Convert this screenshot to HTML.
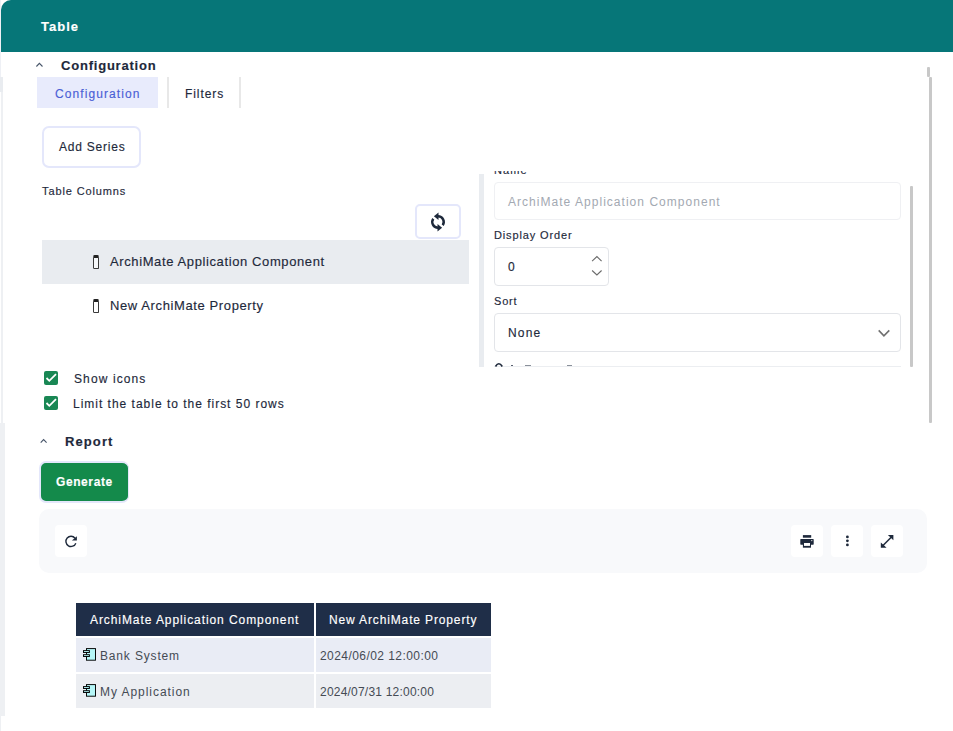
<!DOCTYPE html>
<html><head><meta charset="utf-8">
<style>
*{box-sizing:border-box;margin:0;padding:0}
html,body{width:953px;height:731px;overflow:hidden;background:#fff;font-family:"Liberation Sans",sans-serif;color:#1e293b}
.a{position:absolute}
.t{position:absolute;white-space:pre;line-height:1;-webkit-text-stroke:0.15px currentColor}
</style></head><body>
<!-- left faint strips -->
<div class="a" style="left:0;top:0;width:1px;height:77px;background:#eef0f5"></div>
<div class="a" style="left:0;top:77px;width:3px;height:15px;background:#e9ecf0"></div>
<div class="a" style="left:1px;top:92px;width:2px;height:331px;background:#eef0f3"></div>
<div class="a" style="left:0;top:423px;width:5px;height:293px;background:#eef0f3"></div>
<div class="a" style="left:0;top:716px;width:1px;height:15px;background:#eef0f3"></div>

<!-- header -->
<div class="a" style="left:1px;top:0;width:970px;height:52px;background:#067678;border-radius:10px 10px 0 0"></div>
<div class="t" style="left:41px;top:20px;font-size:13px;font-weight:700;color:#fff;letter-spacing:1px">Table</div>

<!-- Configuration section heading -->
<svg class="a" style="left:32px;top:56px" width="16" height="16" viewBox="0 0 16 16"><path d="M4.4 10.5 L7.4 7.4 L10.5 10.5" fill="none" stroke="#475569" stroke-width="1.1"/></svg>
<div class="t" style="left:61px;top:59px;font-size:13px;font-weight:700;color:#1e293b;letter-spacing:0.79px">Configuration</div>

<!-- tabs -->
<div class="a" style="left:37px;top:77px;width:121px;height:31px;background:#e8ebfc"></div>
<div class="t" style="left:55px;top:88px;font-size:12px;color:#4b5fd6;letter-spacing:1.08px">Configuration</div>
<div class="a" style="left:167px;top:77px;width:2px;height:31px;background:#e8e8e8"></div>
<div class="t" style="left:185px;top:88px;font-size:12px;color:#1e293b;letter-spacing:0.92px">Filters</div>
<div class="a" style="left:239px;top:77px;width:2px;height:31px;background:#e8e8e8"></div>

<!-- Add series -->
<div class="a" style="left:42px;top:126px;width:99px;height:42px;border:2px solid #e4e7fb;border-radius:7px"></div>
<div class="t" style="left:59px;top:141px;font-size:12px;color:#1e293b;letter-spacing:0.78px">Add Series</div>

<div class="t" style="left:42px;top:186px;font-size:11px;color:#1e293b;letter-spacing:0.88px">Table Columns</div>

<!-- sync button -->
<div class="a" style="left:415px;top:204px;width:46px;height:35px;border:2px solid #e4e7fb;border-radius:5px"></div>
<svg class="a" style="left:428px;top:212px" width="20" height="20" viewBox="0 0 20 20"><g fill="#1e293b"><path d="M10 4.25 A5.75 5.75 0 0 1 14.7 13.3" fill="none" stroke="#1e293b" stroke-width="2.4"/><path d="M5.9 4.25 L10.5 0.4 L10.5 8.1Z"/><path d="M5.3 6.7 A5.75 5.75 0 0 0 10 15.75" fill="none" stroke="#1e293b" stroke-width="2.4"/><path d="M14.1 15.75 L9.5 11.9 L9.5 19.6Z"/></g></svg>

<!-- list -->
<div class="a" style="left:42px;top:240px;width:427px;height:44px;background:#e9ecf0"></div>
<div class="a" style="left:93px;top:255px;width:6px;height:14px;border:1px solid #3a3a3a;border-top:3.5px solid #222;border-radius:1.5px;background:#f6f8fa"></div>
<div class="t" style="left:110px;top:255px;font-size:13px;color:#1e293b;letter-spacing:0.61px">ArchiMate Application Component</div>
<div class="a" style="left:93px;top:299px;width:6px;height:14px;border:1px solid #3a3a3a;border-top:3.5px solid #222;border-radius:1.5px;background:#fff"></div>
<div class="t" style="left:110px;top:299px;font-size:13px;color:#1e293b;letter-spacing:0.61px">New ArchiMate Property</div>

<!-- separator -->
<div class="a" style="left:479px;top:174px;width:5px;height:193px;background:#e9ecf0"></div>

<!-- right panel (clipped) -->
<div class="a" style="left:484px;top:171px;width:432px;height:196px;overflow:hidden">
  <div class="t" style="left:10px;top:-6px;font-size:11px;color:#1e293b;letter-spacing:1.1px">Name</div>
  <div class="a" style="left:10px;top:11px;width:407px;height:38px;border:1px solid #eff0f3;border-radius:4px"></div>
  <div class="t" style="left:24px;top:25px;font-size:12px;color:#a3a9b2;letter-spacing:1.03px;-webkit-text-stroke:0">ArchiMate Application Component</div>
  <div class="t" style="left:10px;top:59px;font-size:11px;color:#1e293b;letter-spacing:0.86px">Display Order</div>
  <div class="a" style="left:10px;top:76px;width:115px;height:39px;border:1.5px solid #e3e5e9;border-radius:4px"></div>
  <div class="t" style="left:24px;top:90px;font-size:12px;color:#1e293b">0</div>
  <svg class="a" style="left:104px;top:82px" width="16" height="28" viewBox="0 0 16 28"><path d="M4.1 8.1 L8.9 3.6 L13.6 8.1 M4.1 17.5 L8.9 22 L13.6 17.5" fill="none" stroke="#6b6b6b" stroke-width="1.1"/></svg>
  <div class="t" style="left:10px;top:125px;font-size:11px;color:#1e293b;letter-spacing:0.8px">Sort</div>
  <div class="a" style="left:10px;top:142px;width:407px;height:39px;border:1.5px solid #e3e5e9;border-radius:4px"></div>
  <div class="t" style="left:24px;top:156px;font-size:12px;color:#1e293b;letter-spacing:1.2px">None</div>
  <svg class="a" style="left:386px;top:151px" width="24" height="20" viewBox="0 0 24 20"><path d="M8.7 8.4 L13.9 13.9 L19.3 8.4" fill="none" stroke="#707070" stroke-width="1.6"/></svg>
  <div class="a" style="left:10px;top:195px;width:407px;height:1px;background:#eceef1"></div>
  <svg class="a" style="left:8px;top:188px" width="24" height="8" viewBox="0 0 24 8"><path d="M3.5 7.5 Q6.8 2 10.3 7.5" fill="none" stroke="#1e293b" stroke-width="1.6"/></svg>
  <div class="a" style="left:26.5px;top:194px;width:2px;height:1px;background:#5a6170"></div>
  <div class="a" style="left:41px;top:194px;width:6px;height:1px;background:#8a909a"></div>
  <div class="a" style="left:83px;top:194px;width:5px;height:1px;background:#8a909a"></div>
  <div class="a" style="left:426px;top:15px;width:3px;height:181px;background:#c8c8c8;border-radius:1px"></div>
</div>

<!-- outer scrollbar -->
<div class="a" style="left:927px;top:67px;width:3px;height:10px;background:#c8c8c8;border-radius:1px"></div>
<div class="a" style="left:929px;top:77px;width:3px;height:346px;background:#c8c8c8;border-radius:1px"></div>

<!-- checkboxes -->
<div class="a" style="left:44px;top:371px;width:14px;height:14px;background:#198754;border-radius:2px"></div><svg class="a" style="left:44px;top:371px" width="14" height="14" viewBox="0 0 14 14"><path d="M2.5 7 L5.3 9.8 L12 3.2" fill="none" stroke="#fff" stroke-width="1.8"/></svg>
<div class="t" style="left:74px;top:373px;font-size:12px;color:#1e293b;letter-spacing:1.11px">Show icons</div>
<div class="a" style="left:44px;top:396px;width:14px;height:14px;background:#198754;border-radius:2px"></div><svg class="a" style="left:44px;top:396px" width="14" height="14" viewBox="0 0 14 14"><path d="M2.5 7 L5.3 9.8 L12 3.2" fill="none" stroke="#fff" stroke-width="1.8"/></svg>
<div class="t" style="left:73px;top:398px;font-size:12px;color:#1e293b;letter-spacing:0.99px">Limit the table to the first 50 rows</div>

<!-- Report -->
<svg class="a" style="left:36px;top:433px" width="16" height="16" viewBox="0 0 16 16"><path d="M4.7 9.6 L7.6 6.5 L10.6 9.6" fill="none" stroke="#475569" stroke-width="1.1"/></svg>
<div class="t" style="left:65px;top:435px;font-size:13px;font-weight:700;color:#1e293b;letter-spacing:1.1px">Report</div>

<div class="a" style="left:39px;top:461px;width:90px;height:42px;background:#148a4b;border:2px solid #e4e7fb;border-right-width:1px;border-radius:7px"></div>
<div class="t" style="left:56px;top:476px;font-size:12px;font-weight:700;color:#fff;letter-spacing:0.59px">Generate</div>

<!-- toolbar -->
<div class="a" style="left:39px;top:509px;width:888px;height:64px;background:#f8f9fb;border-radius:10px"></div>
<div class="a" style="left:55px;top:525px;width:32px;height:32px;background:#fff;border-radius:4px"></div>
<svg class="a" style="left:61px;top:531px" width="20" height="20" viewBox="0 0 20 20"><path d="M14.02 7.26 A5.1 5.1 0 1 0 14.8 12.14" fill="none" stroke="#1e293b" stroke-width="1.4"/><path d="M10.9 9.6 L15.9 5.2 L15.9 9.6Z" fill="#1e293b"/></svg>
<div class="a" style="left:791px;top:525px;width:32px;height:32px;background:#fff;border-radius:4px"></div>
<svg class="a" style="left:797px;top:531px" width="20" height="20" viewBox="0 0 20 20"><g fill="#1e293b"><rect x="5.9" y="4.1" width="8.3" height="2.6"/><rect x="3.3" y="8.1" width="13.4" height="5.6" rx="0.6"/><rect x="5.9" y="11" width="8.1" height="5.7"/></g><rect x="7" y="12" width="6" height="2.9" fill="#fff"/><circle cx="14.8" cy="9.6" r="0.6" fill="#fff"/></svg>
<div class="a" style="left:831px;top:525px;width:32px;height:32px;background:#fff;border-radius:4px"></div>
<svg class="a" style="left:837px;top:531px" width="20" height="20" viewBox="0 0 20 20"><g fill="#1e293b"><circle cx="10.4" cy="5.9" r="1.4"/><circle cx="10.4" cy="9.85" r="1.4"/><circle cx="10.4" cy="13.95" r="1.4"/></g></svg>
<div class="a" style="left:871px;top:525px;width:32px;height:32px;background:#fff;border-radius:4px"></div>
<svg class="a" style="left:877px;top:531px" width="20" height="20" viewBox="0 0 20 20"><g fill="#1e293b"><path d="M10.9 4.1 L16.4 4.1 L16.4 9.3Z"/><path d="M3.8 11.5 L3.8 16.7 L9.6 16.7Z"/><path d="M5.5 15 L14.7 5.8" stroke="#1e293b" stroke-width="1.5"/></g></svg>

<!-- table -->
<div class="a" style="left:76px;top:603px;width:238px;height:33px;background:#1f2e48"></div>
<div class="a" style="left:316px;top:603px;width:175px;height:33px;background:#1f2e48"></div>
<div class="t" style="left:90px;top:614px;font-size:12px;color:#fff;letter-spacing:0.92px">ArchiMate Application Component</div>
<div class="t" style="left:329px;top:614px;font-size:12px;color:#fff;letter-spacing:0.86px">New ArchiMate Property</div>
<div class="a" style="left:76px;top:638px;width:238px;height:34px;background:#e9ecf5"></div>
<div class="a" style="left:316px;top:638px;width:175px;height:34px;background:#e9ecf5"></div>
<div class="a" style="left:76px;top:674px;width:238px;height:34px;background:#eceef2"></div>
<div class="a" style="left:316px;top:674px;width:175px;height:34px;background:#eceef2"></div>
<svg class="a" style="left:80px;top:644px" width="20" height="20" viewBox="0 0 20 20"><g fill="#b5f6f7" stroke="#000" stroke-width="0.95"><rect x="6.5" y="4.6" width="9" height="11.6"/><rect x="3.5" y="6.6" width="5.9" height="1.9"/><rect x="3.5" y="10.7" width="5.9" height="1.8"/></g></svg>
<div class="t" style="left:100px;top:650px;font-size:12px;color:#454b54;-webkit-text-stroke:0;letter-spacing:0.84px">Bank System</div>
<div class="t" style="left:320px;top:650px;font-size:12px;color:#454b54;-webkit-text-stroke:0;letter-spacing:0.44px">2024/06/02 12:00:00</div>
<svg class="a" style="left:80px;top:680px" width="20" height="20" viewBox="0 0 20 20"><g fill="#b5f6f7" stroke="#000" stroke-width="0.95"><rect x="6.5" y="4.6" width="9" height="11.6"/><rect x="3.5" y="6.6" width="5.9" height="1.9"/><rect x="3.5" y="10.7" width="5.9" height="1.8"/></g></svg>
<div class="t" style="left:100px;top:686px;font-size:12px;color:#454b54;-webkit-text-stroke:0;letter-spacing:0.95px">My Application</div>
<div class="t" style="left:320px;top:686px;font-size:12px;color:#454b54;-webkit-text-stroke:0;letter-spacing:0.21px">2024/07/31 12:00:00</div>
</body></html>
